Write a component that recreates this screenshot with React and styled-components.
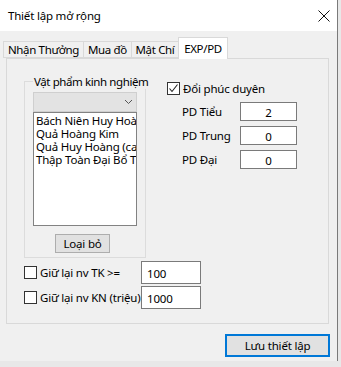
import React from 'react';
import styled, { createGlobalStyle } from 'styled-components';

const Global = createGlobalStyle`
  html, body { margin: 0; padding: 0; background: #e8e8e8; }
  body {
    font-family: "Noto Sans", "Open Sans", sans-serif;
    font-size: 11.5px;
    letter-spacing: -0.2px;
    color: #000;
  }
  * { box-sizing: border-box; }
`;

const Window = styled.div`
  width: 338px;
  height: 361px;
  background: #f0f0f0;
  border-right: 1px solid #7a7a7a;
  display: flex;
  flex-direction: column;
`;

const TitleBar = styled.div`
  height: 31px;
  background: #fff;
  display: flex;
  align-items: center;
  justify-content: space-between;
  padding-left: 8px;
`;

const CloseBox = styled.div`
  width: 24px;
  height: 24px;
  margin-right: 1px;
  display: flex;
  align-items: center;
  justify-content: center;
`;

const Body = styled.div`
  flex: 1;
  display: flex;
  flex-direction: column;
  padding: 6px 0 0 3px;
`;

const TabStrip = styled.div`
  display: flex;
  align-items: flex-end;
  height: 21px;
  position: relative;
  z-index: 1;
`;

const Tab = styled.div`
  width: ${p => p.$w}px;
  height: ${p => (p.$active ? 22 : 17)}px;
  margin-bottom: ${p => (p.$active ? -1 : 0)}px;
  background: ${p => (p.$active ? '#fff' : '#f0f0f0')};
  border: 1px solid #d9d9d9;
  border-bottom: ${p => (p.$active ? 'none' : '1px solid #d9d9d9')};
  border-right: ${p => (p.$last ? '1px solid #d9d9d9' : 'none')};
  display: flex;
  align-items: center;
  justify-content: center;
  padding-top: ${p => (p.$active ? 0 : 1)}px;
  line-height: 14px;
  letter-spacing: -0.35px;
  white-space: nowrap;
`;

const Panel = styled.div`
  margin-left: 3px;
  width: 323px;
  height: 266px;
  border: 1px solid #d9d9d9;
  background: #f0f0f0;
  padding: 15px 0 0 17px;
  display: flex;
  flex-direction: column;
`;

const TopRow = styled.div`
  display: flex;
  align-items: flex-start;
`;

const Group = styled.fieldset`
  margin: 0;
  min-width: 0;
  width: 122px;
  height: 184px;
  border: 1px solid #dcdcdc;
  padding: 0 8px 2px 8px;
  display: flex;
  flex-direction: column;
  align-items: flex-start;
  flex: none;
`;

const Legend = styled.legend`
  padding: 0 1px;
  margin-left: 0;
  line-height: 15px;
  letter-spacing: -0.4px;
  white-space: nowrap;
`;

const Combo = styled.div`
  margin-top: 3px;
  width: 104px;
  height: 20px;
  background: #e3e3e3;
  border: 1px solid #cfcfcf;
  display: flex;
  align-items: center;
  justify-content: flex-end;
  padding-right: 3px;
`;

const ListBox = styled.div`
  width: 104px;
  height: 114px;
  background: #fff;
  border: 1px solid #828282;
  padding: 1px 0 0 2px;
  overflow: hidden;
`;

const ListItem = styled.div`
  line-height: 13px;
  height: 13px;
  white-space: nowrap;
`;

const Button = styled.button`
  font: inherit;
  letter-spacing: inherit;
  color: #000;
  width: ${p => p.$w}px;
  height: ${p => p.$h}px;
  background: #e1e1e1;
  border: ${p => (p.$focus ? '2px solid #0078d7' : '1px solid #adadad')};
  padding: 0;
  display: flex;
  align-items: center;
  justify-content: center;
  line-height: 14px;
`;

const RemoveButton = styled(Button)`
  margin-top: 8px;
  margin-left: 22px;
`;

const RightCol = styled.div`
  margin-left: 21px;
  margin-top: 6px;
  display: flex;
  flex-direction: column;
`;

const CheckRow = styled.label`
  display: flex;
  align-items: center;
  gap: 3px;
  height: 16px;
  white-space: nowrap;
`;

const Box = styled.span`
  width: 13px;
  height: 13px;
  border: 1px solid #333;
  background: #fff;
  display: flex;
  align-items: center;
  justify-content: center;
  flex: none;
`;

const PdList = styled.div`
  margin-top: 6px;
  margin-left: 15px;
  display: flex;
  flex-direction: column;
  gap: 5px;
`;

const PdRow = styled.div`
  display: grid;
  grid-template-columns: 58px 57px;
  align-items: center;
`;

const Field = styled.div`
  width: ${p => p.$w}px;
  height: ${p => p.$h}px;
  background: #fff;
  border: 1px solid #7a7a7a;
  display: flex;
  align-items: center;
  justify-content: ${p => (p.$center ? 'center' : 'flex-start')};
  padding-left: ${p => (p.$center ? 0 : 5)}px;
  padding-top: 1px;
`;

const KeepList = styled.div`
  margin-top: 3px;
  display: flex;
  flex-direction: column;
  gap: 2px;
`;

const KeepRow = styled.div`
  display: grid;
  grid-template-columns: 117px 60px;
  align-items: center;
`;

const Footer = styled.div`
  display: flex;
  justify-content: flex-end;
  padding: 10px 7px 0 0;
`;

const Check = () => (
  <svg width="11" height="11" viewBox="0 0 11 11">
    <path d="M1.5 5.5 L4 8.5 L9.5 1.5" fill="none" stroke="#222" strokeWidth="1.1" />
  </svg>
);

const Chevron = () => (
  <svg width="9" height="6" viewBox="0 0 9 6">
    <path d="M1 1 L4.5 4.5 L8 1" fill="none" stroke="#555" strokeWidth="1" />
  </svg>
);

const CloseIcon = () => (
  <svg width="12" height="12" viewBox="0 0 12 12">
    <path d="M0.5 0.5 L11.5 11.5 M11.5 0.5 L0.5 11.5" stroke="#111" strokeWidth="1" />
  </svg>
);

const items = ['Bách Niên Huy Hoàng', 'Quả Hoàng Kim', 'Quả Huy Hoàng (cao cấp)', 'Thập Toàn Đại Bổ Thang'];
const pds = [['PD Tiểu', '2'], ['PD Trung', '0'], ['PD Đại', '0']];
const keeps = [['Giữ lại nv TK >=', '100'], ['Giữ lại nv KN (triệu)', '1000']];

export default function App() {
  return (
    <>
      <Global />
      <Window>
        <TitleBar>
          <span>Thiết lập mở rộng</span>
          <CloseBox><CloseIcon /></CloseBox>
        </TitleBar>
        <Body>
          <TabStrip>
            <Tab $w={80}>Nhận Thưởng</Tab>
            <Tab $w={48}>Mua đồ</Tab>
            <Tab $w={47}>Mật Chí</Tab>
            <Tab $w={50} $active $last>EXP/PD</Tab>
          </TabStrip>
          <Panel>
            <TopRow>
              <Group>
                <Legend>Vật phẩm kinh nghiệm</Legend>
                <Combo><Chevron /></Combo>
                <ListBox>
                  {items.map(t => <ListItem key={t}>{t}</ListItem>)}
                </ListBox>
                <RemoveButton $w={55} $h={19}>Loại bỏ</RemoveButton>
              </Group>
              <RightCol>
                <CheckRow><Box><Check /></Box>Đổi phúc duyên</CheckRow>
                <PdList>
                  {pds.map(([l, v]) => (
                    <PdRow key={l}>
                      <span>{l}</span>
                      <Field $w={57} $h={19} $center>{v}</Field>
                    </PdRow>
                  ))}
                </PdList>
              </RightCol>
            </TopRow>
            <KeepList>
              {keeps.map(([l, v]) => (
                <KeepRow key={l}>
                  <CheckRow><Box />{l}</CheckRow>
                  <Field $w={60} $h={23}>{v}</Field>
                </KeepRow>
              ))}
            </KeepList>
          </Panel>
          <Footer>
            <Button $w={105} $h={23} $focus>Lưu thiết lập</Button>
          </Footer>
        </Body>
      </Window>
    </>
  );
}
